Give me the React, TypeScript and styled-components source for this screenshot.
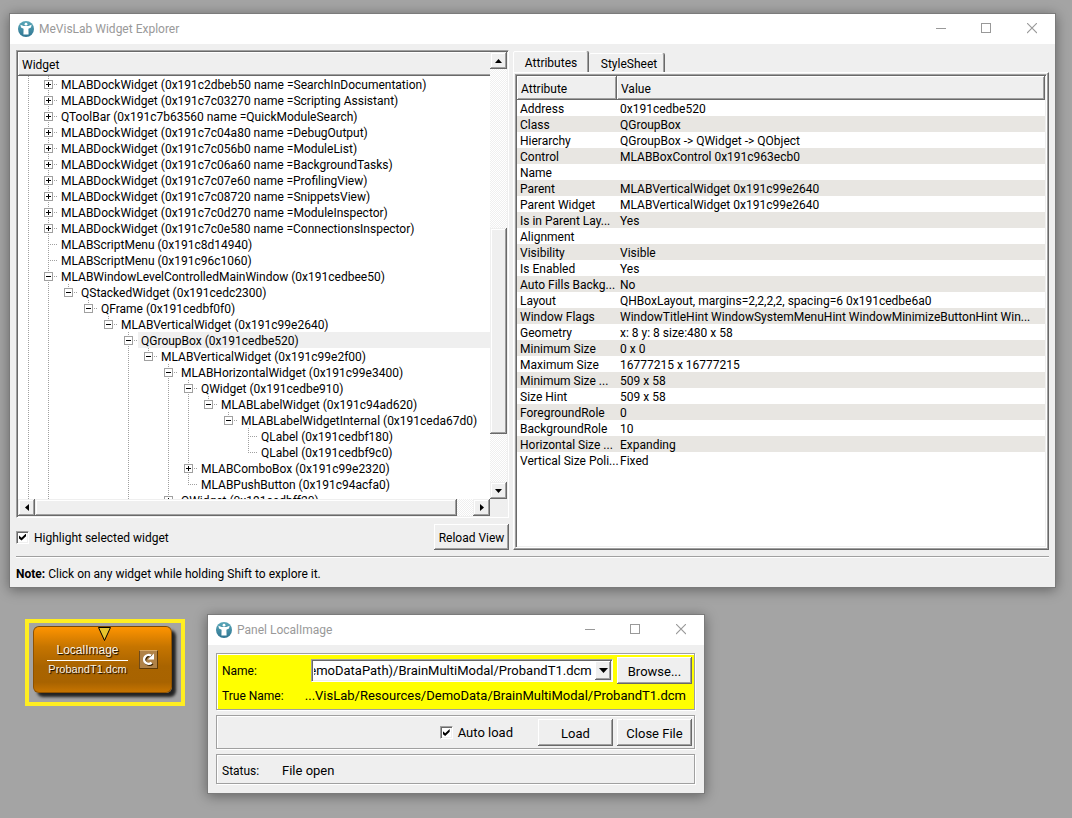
import React, { useLayoutEffect, useRef } from "react";
import styled, { createGlobalStyle, css } from "styled-components";

const c = {
  face: "#efefef",
  light: "#ffffff",
  mid: "#a0a0a0",
  dark: "#696969",
  caption: "#999999",
  alt: "#e8e6e2",
  highlight: "#ffff00",
};

const raised = css`
  box-shadow: inset -1px -1px ${c.dark}, inset 1px 1px ${c.light}, inset -2px -2px ${c.mid};
`;

const sunken = css`
  border: 1px solid;
  border-color: ${c.mid} ${c.light} ${c.light} ${c.mid};
  box-shadow: inset 1px 1px ${c.dark}, inset -1px -1px ${c.face};
`;

const GlobalStyle = createGlobalStyle`
  * { box-sizing: border-box; }
  body {
    margin: 0;
    background: #a4a4a4;
    color: #000;
    font: 12px/14px Roboto, "Segoe UI", sans-serif;
  }
  button, input { font: inherit; color: inherit; margin: 0; padding: 0; }
`;

const Desktop = styled.main`
  position: relative;
  min-height: 100vh;
  overflow: hidden;
`;

/* ---------- window chrome ---------- */

const WindowFrame = styled.section`
  position: absolute;
  display: flex;
  flex-direction: column;
  background: ${c.face};
  border: 1px solid #7b7b7b;
  box-shadow: 0 2px 12px rgba(0, 0, 0, 0.4);
`;

const ExplorerFrame = styled(WindowFrame)`
  top: 13px;
  left: 9px;
  right: 16px;
  min-width: 760px;
`;

const PanelFrame = styled(WindowFrame)`
  top: 614px;
  left: 207px;
  width: 498px;
`;

const TitleBar = styled.header`
  display: flex;
  align-items: center;
  height: 30px;
  padding-left: 8px;
  gap: 5px;
  background: ${c.light};
  color: ${c.caption};
`;

const Title = styled.h1`
  flex: 1;
  margin: 0;
  font-size: 12px;
  font-weight: 400;
`;

const WindowButtons = styled.div`
  display: flex;
`;

const WindowButton = styled.button`
  display: grid;
  place-items: center;
  width: 46px;
  height: 28px;
  border: 0;
  background: none;
`;

const Logo = () => (
  <svg width="16" height="16" viewBox="0 0 16 16" aria-hidden="true">
    <defs>
      <linearGradient id="logo" x1="0" y1="0" x2="0" y2="1">
        <stop offset="0" stopColor="#5aa7b8" />
        <stop offset="1" stopColor="#2f7592" />
      </linearGradient>
    </defs>
    <circle cx="8" cy="8" r="8" fill="url(#logo)" />
    <circle cx="8" cy="3.2" r="1.4" fill="#fff" />
    <path d="M2.4 3.8 L5.6 5 H10.4 L13.6 3.8 L13 6.6 L10.4 7.8 L10.6 13.6 H5.4 L5.6 7.8 L3 6.6 Z" fill="#fff" />
  </svg>
);

const Caption = ({ title }: { title: string }) => (
  <TitleBar>
    <Logo />
    <Title>{title}</Title>
    <WindowButtons>
      <WindowButton aria-label="Minimize">
        <svg width="12" height="12"><path d="M2 5.5H12" stroke={c.caption} /></svg>
      </WindowButton>
      <WindowButton aria-label="Maximize">
        <svg width="10" height="12"><rect x="0.5" y="0.5" width="9" height="9" fill="none" stroke={c.caption} /></svg>
      </WindowButton>
      <WindowButton aria-label="Close">
        <svg width="10" height="12"><path d="M0 0L10 10M10 0L0 10" stroke={c.caption} strokeWidth="1.1" /></svg>
      </WindowButton>
    </WindowButtons>
  </TitleBar>
);

/* ---------- shared controls ---------- */

const PushButton = styled.button<{ $large?: boolean }>`
  width: 75px;
  height: ${(p) => (p.$large ? 27 : 26)}px;
  padding-top: 2px;
  border: 0;
  background: ${c.face};
  font-size: ${(p) => (p.$large ? 13 : 12)}px;
  white-space: nowrap;
  ${raised}
`;

const CheckLabel = styled.label<{ $large?: boolean }>`
  display: flex;
  align-items: center;
  gap: 5px;
  font-size: ${(p) => (p.$large ? 13 : 12)}px;
`;

const CheckText = styled.span`
  padding-top: 2px;
`;

const CheckBox = styled.input.attrs({ type: "checkbox" })`
  appearance: none;
  display: grid;
  place-items: center;
  width: 13px;
  height: 13px;
  background: ${c.light};
  ${sunken}
  &:checked::after {
    content: "";
    width: 7px;
    height: 7px;
    background: #000;
    clip-path: polygon(0 28%, 36% 62%, 100% 0, 100% 40%, 36% 100%, 0 70%);
  }
`;

/* ---------- scroll bars ---------- */

const ScrollBar = styled.div<{ $vertical?: boolean }>`
  display: flex;
  flex-direction: ${(p) => (p.$vertical ? "column" : "row")};
  background: repeating-conic-gradient(${c.face} 0 25%, ${c.light} 0 50%) 0 0 / 2px 2px;
`;

const ScrollButton = styled.button`
  display: grid;
  place-items: center;
  flex: none;
  width: 17px;
  height: 17px;
  border: 0;
  background: ${c.face};
  box-shadow: inset -1px -1px ${c.dark}, inset 1px 1px ${c.face}, inset -2px -2px ${c.mid}, inset 2px 2px ${c.light};
`;

const Thumb = styled.div<{ $share: number }>`
  flex: ${(p) => p.$share} 0 0;
  background: ${c.face};
  box-shadow: inset -1px -1px ${c.dark}, inset 1px 1px ${c.face}, inset -2px -2px ${c.mid}, inset 2px 2px ${c.light};
`;

const Track = styled.div<{ $share: number }>`
  flex: ${(p) => p.$share} 0 0;
`;

const arrows = {
  up: "M0 6H7L3.5 2Z",
  down: "M0 2H7L3.5 6Z",
  left: "M6 0V7L2 3.5Z",
  right: "M2 0V7L6 3.5Z",
};

const Arrow = ({ dir }: { dir: keyof typeof arrows }) => (
  <svg width="7" height="7" aria-hidden="true"><path d={arrows[dir]} /></svg>
);

/* ---------- widget explorer ---------- */

const ExplorerBody = styled.div`
  display: flex;
  flex-direction: column;
  padding: 6px 6px 5px;
`;

const Columns = styled.div`
  display: grid;
  grid-template-columns: minmax(0, 493fr) minmax(0, 536fr);
  gap: 4px;
`;

const LeftColumn = styled.div`
  display: flex;
  flex-direction: column;
  gap: 6px;
`;

const TreeFrame = styled.div`
  display: grid;
  grid-template-columns: minmax(0, 1fr) 17px;
  grid-template-rows: 24px 423px 17px;
  padding: 1px;
  background: ${c.face};
  ${sunken}
`;

const TreeHeader = styled.div`
  padding: 6px 4px 0;
  background: ${c.face};
  box-shadow: inset 0 -1px ${c.dark}, inset 1px 1px ${c.light}, inset 0 -2px ${c.mid};
`;

const TreeScrollBar = styled(ScrollBar)`
  grid-column: 2;
  grid-row: 1 / 3;
`;

const Tree = styled.ul`
  grid-row: 2;
  margin: 0;
  padding: 0;
  overflow: hidden;
  list-style: none;
  background: ${c.light};
`;

const TreeRow = styled.li`
  display: flex;
  height: 16px;
`;

const TreeLabel = styled.span<{ $selected: boolean }>`
  flex: 1;
  padding: 2px 0 0 3px;
  white-space: nowrap;
  background: ${(p) => (p.$selected ? c.face : "transparent")};
`;

/* Column codes: "|" line, " " blank, "+"/"-" box with line through,
   "e" box that ends its line, "t" leaf, "l" last leaf. */
const Branch = ({ kind, open }: { kind: string; open: boolean }) => {
  const box = "+-e".includes(kind);
  const full = "|+-t".includes(kind);
  const arm = kind !== "|" && kind !== " ";
  return (
    <svg width="20" height="16" aria-hidden="true">
      {kind !== " " && <path d={`M10.5 0V${full ? 16 : 9}`} stroke={c.mid} strokeDasharray="1 1" />}
      {arm && <path d="M10 8.5H20" stroke={c.mid} strokeDasharray="1 1" />}
      {box && (
        <>
          <rect x="6.5" y="4.5" width="8" height="8" fill="#fff" stroke={c.mid} />
          <path d={open ? "M8 8.5H13" : "M8 8.5H13M10.5 6V11"} stroke="#000" />
        </>
      )}
    </svg>
  );
};

const treeRows: [string, string][] = [
  ["|+", "MLABDockWidget (0x191c2dbeb50 name =SearchInDocumentation)"],
  ["|+", "MLABDockWidget (0x191c7c03270 name =Scripting Assistant)"],
  ["|+", "QToolBar (0x191c7b63560 name =QuickModuleSearch)"],
  ["|+", "MLABDockWidget (0x191c7c04a80 name =DebugOutput)"],
  ["|+", "MLABDockWidget (0x191c7c056b0 name =ModuleList)"],
  ["|+", "MLABDockWidget (0x191c7c06a60 name =BackgroundTasks)"],
  ["|+", "MLABDockWidget (0x191c7c07e60 name =ProfilingView)"],
  ["|+", "MLABDockWidget (0x191c7c08720 name =SnippetsView)"],
  ["|+", "MLABDockWidget (0x191c7c0d270 name =ModuleInspector)"],
  ["|+", "MLABDockWidget (0x191c7c0e580 name =ConnectionsInspector)"],
  ["|t", "MLABScriptMenu (0x191c8d14940)"],
  ["|t", "MLABScriptMenu (0x191c96c1060)"],
  ["|-", "MLABWindowLevelControlledMainWindow (0x191cedbee50)"],
  ["||e", "QStackedWidget (0x191cedc2300)"],
  ["|| e", "QFrame (0x191cedbf0f0)"],
  ["||  e", "MLABVerticalWidget (0x191c99e2640)"],
  ["||   -", "QGroupBox (0x191cedbe520)"],
  ["||   |e", "MLABVerticalWidget (0x191c99e2f00)"],
  ["||   | -", "MLABHorizontalWidget (0x191c99e3400)"],
  ["||   | |-", "QWidget (0x191cedbe910)"],
  ["||   | ||e", "MLABLabelWidget (0x191c94ad620)"],
  ["||   | || e", "MLABLabelWidgetInternal (0x191ceda67d0)"],
  ["||   | ||  t", "QLabel (0x191cedbf180)"],
  ["||   | ||  l", "QLabel (0x191cedbf9c0)"],
  ["||   | |+", "MLABComboBox (0x191c99e2320)"],
  ["||   | |l", "MLABPushButton (0x191c94acfa0)"],
  ["||   | +", "QWidget (0x191cedbff20)"],
];

const BottomRow = styled.div`
  display: flex;
  align-items: center;
  justify-content: space-between;
`;

const RightColumn = styled.div`
  display: flex;
  flex-direction: column;
`;

const TabBar = styled.div`
  display: flex;
  align-items: flex-end;
  height: 22px;
`;

const Tab = styled.button<{ $active?: boolean }>`
  width: 76px;
  height: ${(p) => (p.$active ? 21 : 19)}px;
  padding: ${(p) => (p.$active ? "2px 0 0" : "2px 0 0 4px")};
  border: 0;
  border-radius: 2px 2px 0 0;
  background: ${c.face};
  box-shadow: inset -1px 0 ${c.dark}, inset 0 1px ${c.light}, inset -2px 0 ${c.mid},
    inset ${(p) => (p.$active ? 1 : 0)}px 0 ${c.light};
`;

const TabPane = styled.div`
  display: flex;
  flex: 1;
  padding: 1px;
  border: 1px solid;
  border-color: ${c.light} ${c.dark} ${c.dark} ${c.light};
  box-shadow: inset -1px -1px ${c.mid};
`;

const TableFrame = styled.div`
  flex: 1;
  min-width: 0;
  padding: 1px;
  background: ${c.light};
  ${sunken}
`;

const AttributeTable = styled.table`
  width: 100%;
  table-layout: fixed;
  border-collapse: collapse;
`;

const HeadCell = styled.th<{ $width?: number }>`
  width: ${(p) => (p.$width ? `${p.$width}px` : "auto")};
  height: 24px;
  padding: 2px 4px 0;
  background: ${c.face};
  font-weight: 400;
  text-align: left;
  ${raised}
`;

const AttributeRow = styled.tr`
  &:nth-child(even) { background: ${c.alt}; }
`;

const Cell = styled.td`
  height: 16px;
  padding: 2px 0 0 3px;
  white-space: nowrap;
`;

const attributes: [string, string][] = [
  ["Address", "0x191cedbe520"],
  ["Class", "QGroupBox"],
  ["Hierarchy", "QGroupBox -> QWidget -> QObject"],
  ["Control", "MLABBoxControl 0x191c963ecb0"],
  ["Name", ""],
  ["Parent", "MLABVerticalWidget 0x191c99e2640"],
  ["Parent Widget", "MLABVerticalWidget 0x191c99e2640"],
  ["Is in Parent Lay...", "Yes"],
  ["Alignment", ""],
  ["Visibility", "Visible"],
  ["Is Enabled", "Yes"],
  ["Auto Fills Backg...", "No"],
  ["Layout", "QHBoxLayout, margins=2,2,2,2, spacing=6 0x191cedbe6a0"],
  ["Window Flags", "WindowTitleHint WindowSystemMenuHint WindowMinimizeButtonHint Win..."],
  ["Geometry", "x: 8 y: 8 size:480 x 58"],
  ["Minimum Size", "0 x 0"],
  ["Maximum Size", "16777215 x 16777215"],
  ["Minimum Size ...", "509 x 58"],
  ["Size Hint", "509 x 58"],
  ["ForegroundRole", "0"],
  ["BackgroundRole", "10"],
  ["Horizontal Size ...", "Expanding"],
  ["Vertical Size Poli...", "Fixed"],
];

const Separator = styled.hr`
  width: 100%;
  height: 2px;
  margin: 6px 0 0;
  border: 0;
  background: linear-gradient(${c.mid} 50%, ${c.light} 50%);
`;

const Note = styled.p`
  margin: 0;
  padding-top: 8px;
  line-height: 16px;
`;

const Explorer = () => (
  <ExplorerFrame>
    <Caption title="MeVisLab Widget Explorer" />
    <ExplorerBody>
      <Columns>
        <LeftColumn>
          <TreeFrame>
            <TreeHeader>Widget</TreeHeader>
            <TreeScrollBar $vertical>
              <ScrollButton aria-label="Scroll up"><Arrow dir="up" /></ScrollButton>
              <Track $share={159} />
              <Thumb $share={206} />
              <Track $share={48} />
              <ScrollButton aria-label="Scroll down"><Arrow dir="down" /></ScrollButton>
            </TreeScrollBar>
            <Tree>
              {treeRows.map(([columns, label]) => (
                <TreeRow key={label}>
                  {[...columns].map((kind, i) => (
                    <Branch key={i} kind={kind} open={kind !== "+"} />
                  ))}
                  <TreeLabel $selected={label.startsWith("QGroupBox")}>{label}</TreeLabel>
                </TreeRow>
              ))}
            </Tree>
            <ScrollBar>
              <ScrollButton aria-label="Scroll left"><Arrow dir="left" /></ScrollButton>
              <Thumb $share={422} />
              <Track $share={16} />
              <ScrollButton aria-label="Scroll right"><Arrow dir="right" /></ScrollButton>
            </ScrollBar>
          </TreeFrame>
          <BottomRow>
            <CheckLabel>
              <CheckBox defaultChecked />
              <CheckText>Highlight selected widget</CheckText>
            </CheckLabel>
            <PushButton>Reload View</PushButton>
          </BottomRow>
        </LeftColumn>
        <RightColumn>
          <TabBar role="tablist">
            <Tab role="tab" aria-selected="true" $active>Attributes</Tab>
            <Tab role="tab" aria-selected="false">StyleSheet</Tab>
          </TabBar>
          <TabPane>
            <TableFrame>
              <AttributeTable>
                <thead>
                  <tr>
                    <HeadCell $width={100}>Attribute</HeadCell>
                    <HeadCell>Value</HeadCell>
                  </tr>
                </thead>
                <tbody>
                  {attributes.map(([name, value]) => (
                    <AttributeRow key={name}>
                      <Cell>{name}</Cell>
                      <Cell>{value}</Cell>
                    </AttributeRow>
                  ))}
                </tbody>
              </AttributeTable>
            </TableFrame>
          </TabPane>
        </RightColumn>
      </Columns>
      <Separator />
      <Note><b>Note:</b> Click on any widget while holding Shift to explore it.</Note>
    </ExplorerBody>
  </ExplorerFrame>
);

/* ---------- LocalImage panel ---------- */

const PanelBody = styled.div`
  display: flex;
  flex-direction: column;
  gap: 5px;
  padding: 8px 9px 9px 8px;
`;

const Group = styled.div`
  border: 1px solid ${c.mid};
  box-shadow: 1px 1px ${c.light}, inset 1px 1px ${c.light};
`;

const FileGroup = styled(Group)`
  display: grid;
  grid-template-columns: 85px minmax(0, 1fr) 75px;
  align-items: center;
  column-gap: 4px;
  row-gap: 4px;
  padding: 3px 2px 5px 5px;
  background: ${c.highlight};
`;

const FieldLabel = styled.label`
  line-height: 16px;
`;

const TrueName = styled.output`
  grid-column: 2 / 4;
  display: flex;
  justify-content: flex-end;
  padding-right: 6px;
  font-size: 13px;
  line-height: 16px;
  white-space: nowrap;
`;

const Combo = styled.div`
  display: flex;
  height: 23px;
  padding: 1px;
  background: ${c.light};
  ${sunken}
`;

const ComboInput = styled.input`
  flex: 1;
  min-width: 0;
  padding-top: 1px;
  margin: 0 3px 0 1px;
  border: 0;
  background: none;
  font-size: 13px;
`;

const ComboButton = styled.button`
  display: grid;
  place-items: center;
  width: 16px;
  border: 0;
  background: ${c.face};
  ${raised}
`;

const LoadGroup = styled(Group)`
  display: flex;
  align-items: center;
  justify-content: flex-end;
  gap: 4px;
  padding: 3px 2px 2px;
`;

const AutoLoad = styled.div`
  padding-right: 21px;
`;

const StatusGroup = styled(Group)`
  display: grid;
  grid-template-columns: 60px 1fr;
  align-items: center;
  height: 30px;
  padding: 4px 5px 0;
`;

const StatusText = styled.output`
  font-size: 13px;
`;

const Panel = () => {
  const path = useRef<HTMLInputElement>(null);
  useLayoutEffect(() => {
    if (path.current) path.current.scrollLeft = path.current.scrollWidth;
  }, []);
  return (
    <PanelFrame>
      <Caption title="Panel LocalImage" />
      <PanelBody>
        <FileGroup>
          <FieldLabel htmlFor="name">Name:</FieldLabel>
          <Combo>
            <ComboInput id="name" ref={path} defaultValue="$(DemoDataPath)/BrainMultiModal/ProbandT1.dcm" />
            <ComboButton aria-label="Recent files">
              <svg width="9" height="6"><path d="M0 0H9L4.5 5Z" /></svg>
            </ComboButton>
          </Combo>
          <PushButton $large>Browse...</PushButton>
          <FieldLabel htmlFor="true-name">True Name:</FieldLabel>
          <TrueName id="true-name">...VisLab/Resources/DemoData/BrainMultiModal/ProbandT1.dcm</TrueName>
        </FileGroup>
        <LoadGroup>
          <AutoLoad>
            <CheckLabel $large><CheckBox defaultChecked />Auto load</CheckLabel>
          </AutoLoad>
          <PushButton $large>Load</PushButton>
          <PushButton $large>Close File</PushButton>
        </LoadGroup>
        <StatusGroup>
          <FieldLabel htmlFor="status">Status:</FieldLabel>
          <StatusText id="status">File open</StatusText>
        </StatusGroup>
      </PanelBody>
    </PanelFrame>
  );
};

/* ---------- network module ---------- */

const ModuleSelection = styled.div`
  position: absolute;
  top: 619px;
  left: 25px;
  display: flex;
  padding: 3px 9px 9px 4px;
  border: 4px solid #ffee22;
`;

const ModuleBox = styled.div`
  position: relative;
  display: flex;
  align-items: center;
  gap: 11px;
  width: 139px;
  height: 67px;
  padding: 0 13px;
  border: 1px solid #8f5200;
  border-top-color: #7a4a08;
  border-radius: 6px;
  background: linear-gradient(#ff9400, #c67500 30%, #a96400 60%, #a86300 85%, #c67400);
  box-shadow: 4px 4px 3px #222;
`;

const ModulePort = styled.svg`
  position: absolute;
  top: 0;
  left: 64px;
`;

const ModuleText = styled.div`
  flex: none;
  width: 81px;
  color: #fff4e0;
  font: 12px/16px "Liberation Sans", Arial, sans-serif;
  text-align: center;
  text-shadow: 1px 1px 1px #000;
`;

const ModuleName = styled.div`
  border-bottom: 1px solid #fff;
  padding-bottom: 2px;
`;

const ModuleFile = styled.div`
  font-size: 11px;
`;

const ReloadButton = styled.button`
  display: grid;
  place-items: center;
  flex: none;
  width: 19px;
  height: 19px;
  border: 1px solid;
  border-color: #d9a864 #5f3a08 #5f3a08 #6f4a18;
  background: #b08248;
`;

const Module = () => (
  <ModuleSelection>
    <ModuleBox>
      <ModulePort width="13" height="15"><path d="M0.5 0.5H12.5L6.5 13.5Z" fill="#e8c42c" stroke="#000" /></ModulePort>
      <ModuleText>
        <ModuleName>LocalImage</ModuleName>
        <ModuleFile>ProbandT1.dcm</ModuleFile>
      </ModuleText>
      <ReloadButton aria-label="Reload">
        <svg width="15" height="15" viewBox="0 0 15 15">
          <path d="M10.6 10.6A4.4 4.4 0 1 1 10 3.8" transform="translate(1 1)" fill="none" stroke="#3a2200" strokeWidth="2.4" />
          <path d="M10.6 10.6A4.4 4.4 0 1 1 10 3.8" fill="none" stroke="#fff" strokeWidth="2.4" />
          <path d="M13 1.4V7.6H6.8Z" fill="#fff" />
        </svg>
      </ReloadButton>
    </ModuleBox>
  </ModuleSelection>
);

export default function App() {
  return (
    <Desktop>
      <GlobalStyle />
      <Explorer />
      <Module />
      <Panel />
    </Desktop>
  );
}
